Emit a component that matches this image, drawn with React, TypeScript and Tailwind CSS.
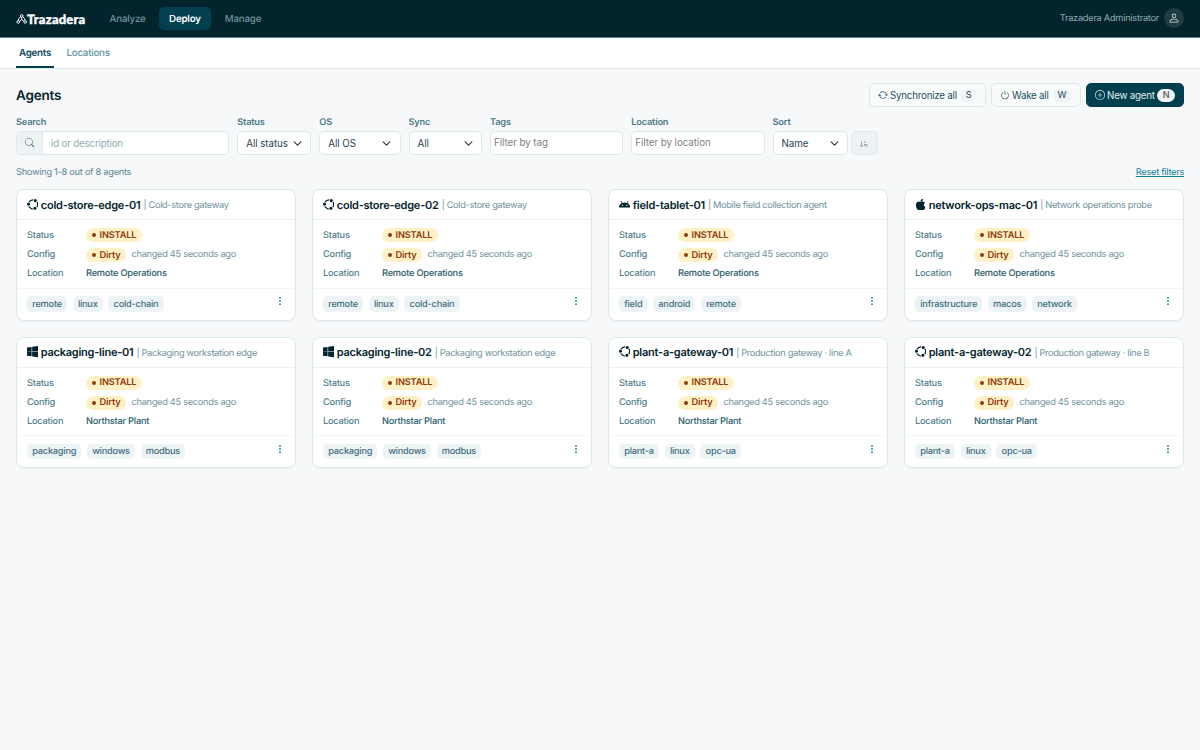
import type { ReactNode } from "react";
import type { IconType } from "react-icons";
import {
  BsAndroid,
  BsApple,
  BsArrowRepeat,
  BsPerson,
  BsPlusCircle,
  BsPower,
  BsSearch,
  BsSortDownAlt,
  BsThreeDotsVertical,
  BsUbuntu,
  BsWindows,
} from "react-icons/bs";

type Agent = {
  name: string;
  description: string;
  icon: IconType;
  location: string;
  tags: string[];
};

const agents: Agent[] = [
  { name: "cold-store-edge-01", description: "Cold-store gateway", icon: BsUbuntu, location: "Remote Operations", tags: ["remote", "linux", "cold-chain"] },
  { name: "cold-store-edge-02", description: "Cold-store gateway", icon: BsUbuntu, location: "Remote Operations", tags: ["remote", "linux", "cold-chain"] },
  { name: "field-tablet-01", description: "Mobile field collection agent", icon: BsAndroid, location: "Remote Operations", tags: ["field", "android", "remote"] },
  { name: "network-ops-mac-01", description: "Network operations probe", icon: BsApple, location: "Remote Operations", tags: ["infrastructure", "macos", "network"] },
  { name: "packaging-line-01", description: "Packaging workstation edge", icon: BsWindows, location: "Northstar Plant", tags: ["packaging", "windows", "modbus"] },
  { name: "packaging-line-02", description: "Packaging workstation edge", icon: BsWindows, location: "Northstar Plant", tags: ["packaging", "windows", "modbus"] },
  { name: "plant-a-gateway-01", description: "Production gateway · line A", icon: BsUbuntu, location: "Northstar Plant", tags: ["plant-a", "linux", "opc-ua"] },
  { name: "plant-a-gateway-02", description: "Production gateway · line B", icon: BsUbuntu, location: "Northstar Plant", tags: ["plant-a", "linux", "opc-ua"] },
];

function Logo() {
  return (
    <a href="#" className="flex h-5 w-[70px] items-center pt-[2px] text-white">
      <svg width="11" height="10" viewBox="0 0 11 10" fill="none" stroke="currentColor" strokeWidth="1" className="shrink-0">
        <circle cx="5.7" cy="1.9" r="1.3" />
        <circle cx="2.2" cy="7.9" r="1.3" />
        <circle cx="9.2" cy="7.9" r="1.3" />
        <path d="M4.6 2.8Q2.6 4.2 2.3 6.4M6.8 2.8Q8.8 4.2 9.1 6.4M5.7 3.3V5.6L3.4 7.3M5.7 5.6 8 7.3" />
      </svg>
      <span className="font-[Lato] text-[13px] leading-none font-black tracking-[0.2px] [-webkit-text-stroke:0.35px_white]">Trazadera</span>
    </a>
  );
}

function Header() {
  return (
    <header className="flex h-[37.5px] items-center border-b border-[#58808a] bg-[#03242c] px-4">
      <Logo />
      <nav className="ml-[13px] flex items-center text-[9.75px] font-medium tracking-[-0.2px] text-[#6f929c]">
        <a href="#" className="flex h-[23px] items-center px-[10.5px] pt-[5px]">Analyze</a>
        <a href="#" className="ml-[2.5px] flex h-[23px] items-center rounded-[5px] bg-[#02404f] px-[10.5px] pt-[5px] font-semibold text-white">Deploy</a>
        <a href="#" className="ml-[3px] flex h-[23px] items-center px-[10.5px] pt-[5px]">Manage</a>
      </nav>
      <div className="ml-auto flex items-center gap-[5px] text-[9.25px] tracking-[-0.27px] text-[#8fadb5]">
        <span className="pt-[2px]">Trazadera Administrator</span>
        <span className="flex size-5 items-center justify-center rounded-full bg-[#1f3c43] text-[#d5e0e3]">
          <BsPerson size={12} />
        </span>
      </div>
    </header>
  );
}

function Tabs() {
  return (
    <nav className="flex h-[31px] items-stretch border-b border-[#dfe9ea] bg-white px-4 text-[9.75px] font-medium tracking-[-0.25px]">
      <a href="#" className="flex items-center border-b-2 border-[#02404f] px-[3px] pt-[5px] font-semibold text-[#0c4a5a]">Agents</a>
      <a href="#" className="ml-[9.5px] flex items-center px-[3px] pt-[3px] text-[#6594a1]">Locations</a>
    </nav>
  );
}

type ActionButtonProps = {
  icon: IconType;
  label: string;
  shortcut: string;
  className: string;
  primary?: boolean;
};

function ActionButton({ icon: Icon, label, shortcut, className, primary }: ActionButtonProps) {
  return (
    <button
      type="button"
      className={`flex h-6 items-center rounded-[5px] border px-2 text-[9.75px] whitespace-nowrap ${className} ${
        primary ? "border-[#02404f] bg-[#02404f] text-[#e3eef0]" : "border-[#dce9eb] bg-[#f9fbfb] text-[#1a5060]"
      }`}
    >
      <Icon size={10} className="shrink-0" />
      <span className="ml-[2px] pt-[2px] tracking-[-0.22px]">{label}</span>
      <kbd
        className={`ml-auto flex h-[13px] items-center rounded-full px-[5.5px] font-[Inter] text-[9px] font-medium ${
          primary ? "bg-[#eef3f5] text-[#4a5a60]" : "bg-[#f0f4f6] text-[#43606a]"
        }`}
      >
        {shortcut}
      </kbd>
    </button>
  );
}

function Field({ label, className, children }: { label: string; className: string; children: ReactNode }) {
  return (
    <div className={`flex flex-col ${className}`}>
      <label className="mb-[2px] h-[14px] pt-px text-[9.25px] leading-[13px] font-semibold tracking-[-0.2px] text-[#4c7886]">{label}</label>
      {children}
    </div>
  );
}

function Select({ value }: { value: string }) {
  return (
    <button type="button" className="flex h-6 w-full items-center justify-between rounded-[5px] border border-[#dce9eb] bg-white pr-[8.5px] pl-2 text-[9.75px] text-[#1f4450]">
      <span className="pt-[2px] tracking-[-0.05px]">{value}</span>
      <svg width="9" height="9" viewBox="0 0 16 16" fill="none" stroke="#343a40" strokeWidth="2" strokeLinecap="round" strokeLinejoin="round">
        <path d="m2 5 6 6 6-6" />
      </svg>
    </button>
  );
}

function FilterInput({ placeholder }: { placeholder: string }) {
  return (
    <input
      placeholder={placeholder}
      className="h-6 w-full rounded-[5px] border border-[#dce9eb] bg-white px-[3px] pb-px text-[9.75px] tracking-[-0.05px] placeholder:text-[#808080]"
    />
  );
}

function Filters() {
  return (
    <div className="flex items-end gap-2">
      <Field label="Search" className="w-[213.25px]">
        <div className="flex h-6 overflow-hidden rounded-[5px] border border-[#dce9eb] bg-white">
          <span className="flex w-[26px] items-center justify-center border-r border-[#dce9eb] bg-[#edf2f3] text-[#44727f]">
            <BsSearch size={9.5} />
          </span>
          <input placeholder="id or description" className="min-w-0 flex-1 px-2 pt-[2px] text-[9.75px] tracking-[-0.18px] placeholder:text-[#93abb3]" />
        </div>
      </Field>
      <Field label="Status" className="w-[74px]"><Select value="All status" /></Field>
      <Field label="OS" className="w-[81.25px]"><Select value="All OS" /></Field>
      <Field label="Sync" className="w-[73.5px]"><Select value="All" /></Field>
      <Field label="Tags" className="w-[133.25px]"><FilterInput placeholder="Filter by tag" /></Field>
      <Field label="Location" className="w-[133.25px]"><FilterInput placeholder="Filter by location" /></Field>
      <div className="flex items-end gap-[3px]">
        <Field label="Sort" className="w-[75.75px]"><Select value="Name" /></Field>
        <button type="button" aria-label="Sort direction" className="flex h-6 w-[27px] items-center justify-center rounded-[5px] border border-[#dce9eb] bg-[#edf2f3] text-[#68868f]">
          <BsSortDownAlt size={9} />
        </button>
      </div>
    </div>
  );
}

function Badge({ children }: { children: ReactNode }) {
  return (
    <span className="flex h-[14px] items-center gap-1 rounded-full bg-[#fff0c5] px-[5.5px] text-[9.25px] font-semibold tracking-[-0.17px] text-[#8f3b0d]">
      <span className="size-1 rounded-full bg-current" />
      <span className="pt-px">{children}</span>
    </span>
  );
}

function AgentCard({ agent }: { agent: Agent }) {
  const Icon = agent.icon;
  return (
    <article className="flex h-[131.5px] flex-col rounded-[8px] border border-[#dce9eb] bg-white shadow-[0_1px_2px_rgba(3,36,44,0.04)]">
      <div className="flex h-[30px] items-center border-b border-[#ebf2f3] px-[10px] whitespace-nowrap">
        <Icon size={11.25} className="text-[#03242c]" />
        <span className="ml-[2.5px] pt-px text-[11px] font-semibold tracking-[-0.24px] text-[#03242c]">{agent.name}</span>
        <span className="ml-[3px] pt-[3px] text-[9.25px] tracking-[-0.33px] text-[#6f929c]">| {agent.description}</span>
      </div>
      <dl className="grid flex-1 grid-cols-[59px_1fr] content-start gap-y-[5px] px-[10px] pt-2 text-[9.25px] leading-[14px] tracking-[-0.24px]">
        <dt className="pt-px font-medium text-[#528090]">Status</dt>
        <dd className="flex items-start"><Badge>INSTALL</Badge></dd>
        <dt className="font-medium text-[#528090]">Config</dt>
        <dd className="flex items-start gap-[5.5px] tracking-[-0.3px] text-[#6f929c]"><Badge>Dirty</Badge>changed 45 seconds ago</dd>
        <dt className="font-medium text-[#528090]">Location</dt>
        <dd className="font-medium text-[#285b6b]">{agent.location}</dd>
      </dl>
      <div className="flex h-[32px] items-center gap-[5.5px] border-t border-[#f1f6f7] px-[10px]">
        {agent.tags.map((tag) => (
          <span key={tag} className="flex h-[15.5px] items-center rounded-[5px] bg-[#eef3f5] px-[5.25px] pt-[1.5px] text-[9.25px] font-medium tracking-[-0.25px] text-[#427080]">
            {tag}
          </span>
        ))}
        <button type="button" aria-label="Agent menu" className="mb-[6px] ml-auto text-[#17809a]">
          <BsThreeDotsVertical size={10} />
        </button>
      </div>
    </article>
  );
}

export default function App() {
  return (
    <div className="min-h-[750px] bg-[#f6f8fa] font-[Inter,sans-serif] [text-rendering:geometricPrecision]">
      <Header />
      <Tabs />
      <main className="px-4 pt-[14.5px]">
        <div className="flex h-6 items-center justify-between">
          <h1 className="pt-[2px] text-[13.5px] font-semibold tracking-[-0.2px] text-[#03242c]">Agents</h1>
          <div className="flex gap-[5px]">
            <ActionButton icon={BsArrowRepeat} label="Synchronize all" shortcut="S" className="w-[117px]" />
            <ActionButton icon={BsPower} label="Wake all" shortcut="W" className="w-[90px]" />
            <ActionButton icon={BsPlusCircle} label="New agent" shortcut="N" className="w-[98px]" primary />
          </div>
        </div>
        <div className="mt-2">
          <Filters />
        </div>
        <div className="mt-[9px] flex h-4 items-center justify-between pt-px text-[9.25px] tracking-[-0.28px] text-[#5b8591]">
          <span>Showing 1-8 out of 8 agents</span>
          <a href="#" className="text-[#0e7f9b] underline">Reset filters</a>
        </div>
        <section className="mt-[9px] grid grid-cols-4 gap-4">
          {agents.map((agent) => (
            <AgentCard key={agent.name} agent={agent} />
          ))}
        </section>
      </main>
    </div>
  );
}
